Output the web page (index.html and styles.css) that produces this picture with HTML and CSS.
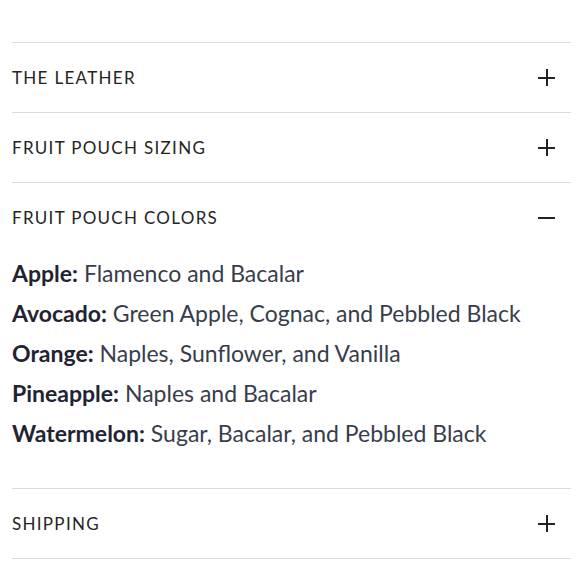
FILE: index.html
```html
<!DOCTYPE html>
<html>
<head>
<meta charset="utf-8">
<link rel="stylesheet" href="styles.css">
</head>
<body>
<div class="accordion">
  <div class="item">
    <div class="head"><span class="title">THE LEATHER</span><span class="icon plus"></span></div>
  </div>
  <div class="item">
    <div class="head"><span class="title">FRUIT POUCH SIZING</span><span class="icon plus"></span></div>
  </div>
  <div class="item open">
    <div class="head"><span class="title">FRUIT POUCH COLORS</span><span class="icon minus"></span></div>
    <div class="body">
      <p><b>Apple:</b> Flamenco and Bacalar</p>
      <p><b>Avocado:</b> Green Apple, Cognac, and Pebbled Black</p>
      <p><b>Orange:</b> Naples, Sunflower, and Vanilla</p>
      <p><b>Pineapple:</b> Naples and Bacalar</p>
      <p><b>Watermelon:</b> Sugar, Bacalar, and Pebbled Black</p>
    </div>
  </div>
  <div class="item last">
    <div class="head"><span class="title">SHIPPING</span><span class="icon plus"></span></div>
  </div>
</div>
</body>
</html>
```
FILE: styles.css
```css
html, body { margin: 0; padding: 0; background: #fff; }
.accordion { padding: 42px 9px 0 12px; }
.item { border-top: 1px solid #dcdcdc; }
.item.last { border-bottom: 1px solid #dcdcdc; }
.head { height: 69px; display: flex; align-items: center; justify-content: space-between; }
.title { font-family: "Lato", sans-serif; font-size: 17px; letter-spacing: 1.3px; color: #242424; font-weight: 400; margin-top: -1px; }
.icon { width: 17px; height: 17px; margin-right: 16px; position: relative; }
.icon::before, .icon::after { content: ""; position: absolute; background: #222; }
.icon::before { left: 0; right: 0; top: 8px; height: 1.5px; }
.plus::after { top: 0; bottom: 0; left: 8px; width: 1.5px; }
.minus::before { height: 2px; }
.body { padding: 1px 0 35px; font-family: "Lato", sans-serif; font-size: 23px; color: #383d4b; }
.body p { margin: 0; line-height: 40px; }
.body b { color: #1f2333; font-weight: 700; }
```
